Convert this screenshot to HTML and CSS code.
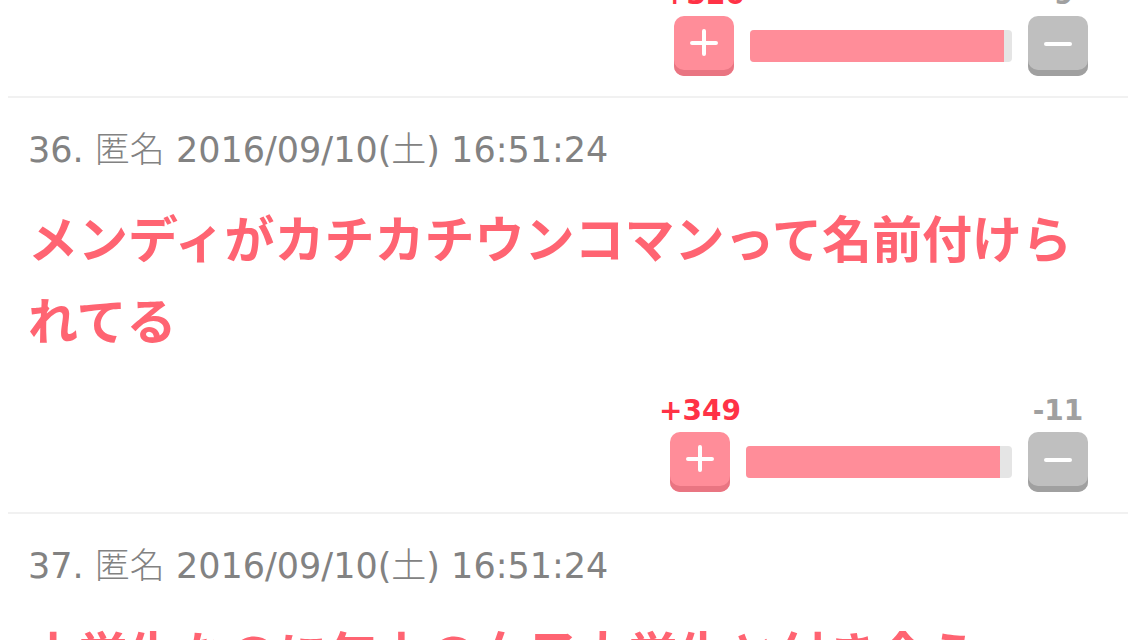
FILE: index.html
```
<!DOCTYPE html>
<html lang="ja">
<head>
<meta charset="utf-8">
<title>コメント一覧</title>
<link rel="stylesheet" href="styles.css">
</head>
<body>
<main class="comments">
  <article class="comment comment-first">
    <div class="votes">
      <div class="vote">
        <span class="count count-plus">+320</span>
        <button class="btn btn-plus" type="button" aria-label="プラス"><svg viewBox="0 0 28 28"><path d="M2 14H26M14 2V25"/></svg></button>
      </div>
      <div class="bar bar-narrow"><div class="fill" style="width:97%"></div></div>
      <div class="vote">
        <span class="count count-minus">-9</span>
        <button class="btn btn-minus" type="button" aria-label="マイナス"><svg viewBox="0 0 28 28"><path d="M2 15H26"/></svg></button>
      </div>
    </div>
  </article>
  <article class="comment">
    <p class="meta">36. <span class="ja">匿名</span> 2016/09/10(<span class="ja">土</span>) 16:51:24</p>
    <h2 class="text">メンディがカチカチウンコマンって名前付けられてる</h2>
    <div class="votes">
      <div class="vote">
        <span class="count count-plus">+349</span>
        <button class="btn btn-plus" type="button" aria-label="プラス"><svg viewBox="0 0 28 28"><path d="M2 14H26M14 2V25"/></svg></button>
      </div>
      <div class="bar"><div class="fill" style="width:95.5%"></div></div>
      <div class="vote">
        <span class="count count-minus">-11</span>
        <button class="btn btn-minus" type="button" aria-label="マイナス"><svg viewBox="0 0 28 28"><path d="M2 15H26"/></svg></button>
      </div>
    </div>
  </article>
  <article class="comment">
    <p class="meta">37. <span class="ja">匿名</span> 2016/09/10(<span class="ja">土</span>) 16:51:24</p>
    <h2 class="text">小学生なのに年上の女子大学生と付き合う</h2>
  </article>
</main>
</body>
</html>
```
FILE: styles.css
```
html {
  overflow: hidden;
}
body {
  margin: 0;
  background: #fff;
  font-family: "DejaVu Sans", "Noto Sans CJK JP", sans-serif;
}
.comments {
  padding: 0 8px;
}
.comment {
  padding: 26px 40px 20px 20px;
  border-bottom: 2px solid #f1f1f1;
}
.comment-first {
  margin-top: -21px;
  padding-top: 0;
}
.meta {
  margin: 0;
  color: #828282;
  font-size: 35px;
  font-weight: 400;
  line-height: 52px;
}
.ja {
  font-weight: 300;
}
.text {
  margin: 19px -24px 0 0;
  color: #ff6472;
  font-family: "Noto Sans CJK JP", sans-serif;
  font-size: 50px;
  font-weight: 700;
  line-height: 82px;
}
.votes {
  display: flex;
  justify-content: flex-end;
  align-items: flex-end;
  gap: 16px;
}
.text + .votes {
  margin-top: 36px;
}
.vote {
  display: flex;
  flex-direction: column;
  align-items: center;
  width: 60px;
}
.count {
  margin-bottom: 5px;
  font-family: "DejaVu Sans", sans-serif;
  font-size: 28px;
  font-weight: 700;
  line-height: 32px;
  white-space: nowrap;
}
.count-plus {
  color: #ff3246;
}
.count-minus {
  color: #a0a0a0;
}
.btn {
  display: flex;
  align-items: center;
  justify-content: center;
  width: 60px;
  height: 60px;
  padding: 0 0 6px;
  border: 0;
  border-radius: 10px;
}
.btn svg {
  width: 28px;
  height: 28px;
  fill: none;
  stroke: #fff;
  stroke-width: 4;
  stroke-linecap: round;
}
.btn-plus {
  background: #ff8d99;
  box-shadow: inset 0 -6px #e97582;
}
.btn-minus {
  background: #bfbfbf;
  box-shadow: inset 0 -6px #a0a0a0;
}
.bar {
  width: 266px;
  height: 32px;
  margin-bottom: 14px;
  border-radius: 4px;
  background: #e5e5e5;
  overflow: hidden;
}
.bar-narrow {
  width: 262px;
}
.fill {
  height: 100%;
  background: #ff8d99;
}
```
